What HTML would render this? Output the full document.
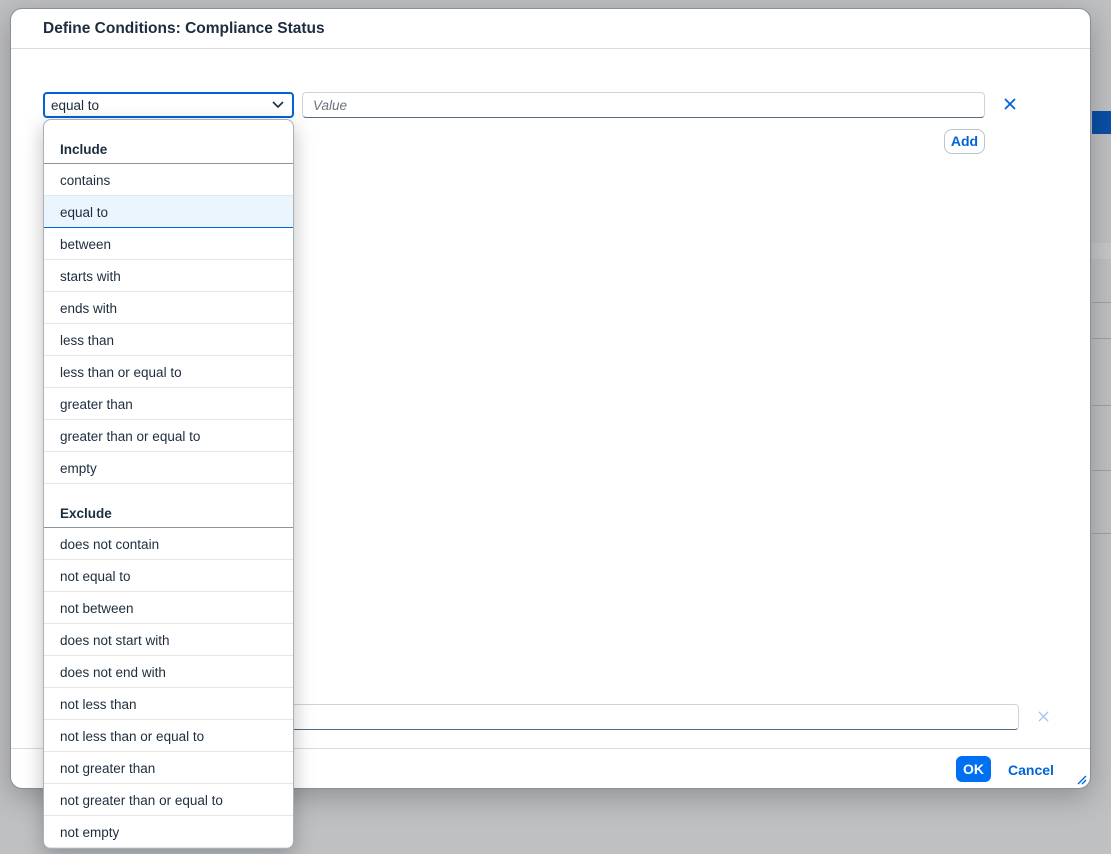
<!DOCTYPE html>
<html><head><style>
*{box-sizing:border-box;margin:0;padding:0}
body{width:1111px;height:854px;background:#bfc0c2;font-family:"Liberation Sans",sans-serif;position:relative;overflow:hidden;color:#1d2d3e}
.bg{position:absolute;left:1092px;right:0}
.dlg{position:absolute;left:10px;top:8px;width:1081px;height:781px;background:#fff;border-radius:12px;box-shadow:0 8px 30px rgba(0,0,0,.25);border:1px solid #8a8f95}
.hdr{height:40px;border-bottom:1px solid #d9dadc;padding:11px 32px;font-weight:bold;font-size:15.5px;color:#1d2d3e}
.sel{position:absolute;left:32px;top:83px;width:251px;height:26px;border:2px solid #0064d9;border-radius:4px;font-size:13.5px;padding:4px 6px}
.val{position:absolute;left:291px;top:83px;width:683px;height:26px;border:1px solid #d0d3d6;border-bottom:1px solid #556b82;border-radius:4px;font-size:13.5px;padding:5px 10px;font-style:italic;color:#6a7480}
.add{position:absolute;left:933px;top:120px;width:41px;height:25px;border:1px solid #bcc3ca;border-radius:8px;color:#0064d9;font-size:14px;font-weight:bold;text-align:center;line-height:23px}
.val2{position:absolute;left:269px;top:695px;width:739px;height:26px;border:1px solid #d0d3d6;border-bottom:1px solid #556b82;border-radius:4px}
.ftr{position:absolute;left:0;right:0;top:739px;border-top:1px solid #d9dadc}
.ok{position:absolute;left:945px;top:747px;width:35px;height:26px;background:#0070f2;color:#fff;border-radius:6px;font-size:14px;font-weight:bold;text-align:center;line-height:26px}
.cancel{position:absolute;left:997px;top:753px;color:#0064d9;font-size:14px;font-weight:bold}
.dd{position:absolute;left:43px;top:119px;width:251px;height:730px;background:#fff;border:1px solid #a8b0b8;border-radius:8px;box-shadow:0 6px 20px rgba(0,0,0,.25);overflow:hidden;padding-top:12px}
.g{height:32px;font-weight:bold;font-size:13.5px;padding:10px 16px 0;border-bottom:1px solid #8c959f}
.i{height:32px;font-size:13.5px;padding:9px 16px 0;border-bottom:1px solid #e5e5e5}
.i.s{background:#ebf5fe;border-bottom:1px solid #0064d9}
</style></head><body>
<div class="bg" style="top:111px;height:23px;background:#0a4fa6"></div>
<div class="bg" style="top:243px;height:16px;background:#c6c7c9"></div>
<div class="bg" style="top:302px;height:1px;background:#9ea2a6"></div>
<div class="bg" style="top:338px;height:1px;background:#9ea2a6"></div>
<div class="bg" style="top:405px;height:1px;background:#9ea2a6"></div>
<div class="bg" style="top:470px;height:1px;background:#9ea2a6"></div>
<div class="bg" style="top:533px;height:1px;background:#9ea2a6"></div>
<div class="dlg">
<div class="hdr">Define Conditions: Compliance Status</div>
<div class="sel">equal to<svg style="position:absolute;right:8px;top:6px" width="12" height="10" viewBox="0 0 12 10"><path d="M1 2 L6 7 L11 2" stroke="#1d2d3e" stroke-width="1.6" fill="none"/></svg></div>
<div class="val">Value</div>
<svg style="position:absolute;left:993px;top:89px" width="12" height="12" viewBox="0 0 12 12"><path d="M1 1L11 11M11 1L1 11" stroke="#0064d9" stroke-width="1.8"/></svg>
<div class="add">Add</div>
<div class="val2"></div>
<svg style="position:absolute;left:1027px;top:702px" width="11" height="11" viewBox="0 0 12 12"><path d="M1 1L11 11M11 1L1 11" stroke="#a9c7ec" stroke-width="1.5"/></svg>
<div class="ftr"></div>
<div class="ok">OK</div>
<div class="cancel">Cancel</div>
<svg style="position:absolute;left:1066px;top:766px" width="10" height="10" viewBox="0 0 10 10"><path d="M1 9L9 1M5 9L9 5" stroke="#0064d9" stroke-width="1.3"/></svg>
</div>
<div class="dd">
<div class="g">Include</div>
<div class="i">contains</div>
<div class="i s">equal to</div>
<div class="i">between</div>
<div class="i">starts with</div>
<div class="i">ends with</div>
<div class="i">less than</div>
<div class="i">less than or equal to</div>
<div class="i">greater than</div>
<div class="i">greater than or equal to</div>
<div class="i">empty</div>
<div style="height:12px"></div>
<div class="g">Exclude</div>
<div class="i">does not contain</div>
<div class="i">not equal to</div>
<div class="i">not between</div>
<div class="i">does not start with</div>
<div class="i">does not end with</div>
<div class="i">not less than</div>
<div class="i">not less than or equal to</div>
<div class="i">not greater than</div>
<div class="i">not greater than or equal to</div>
<div class="i">not empty</div>
</div>
</body></html>
